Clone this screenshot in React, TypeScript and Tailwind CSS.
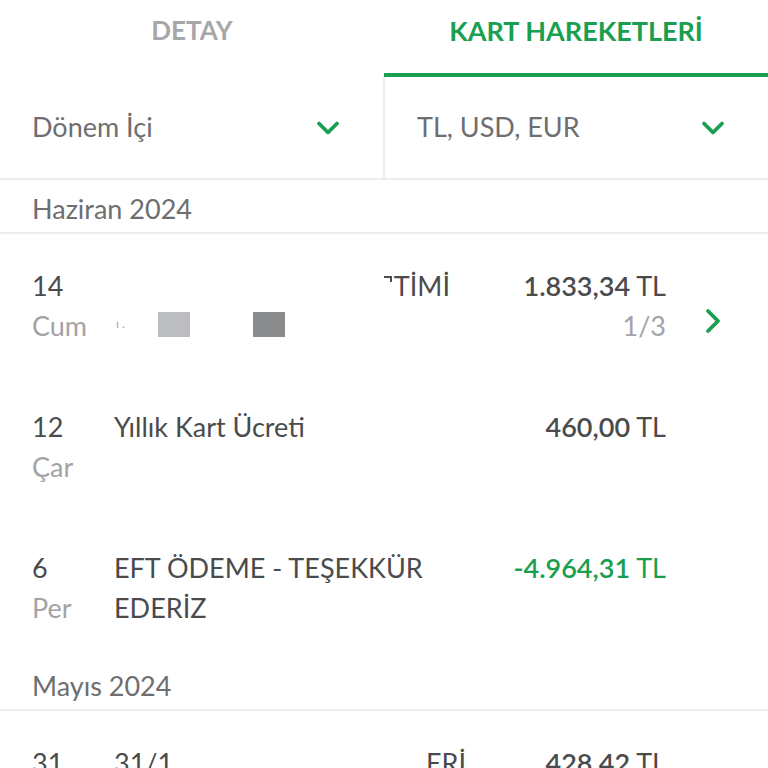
import { ChevronDown, ChevronRight } from 'lucide-react';

type Tx = {
  day: string;
  dayName: string;
  desc: React.ReactNode;
  amount: string;
  credit?: boolean;
  installment?: string;
};

const GREEN = 'text-[#1a9f50]';

const Amount = ({ value, credit }: { value: string; credit?: boolean }) => (
  <span className={credit ? GREEN : 'text-[#4a4b4d]'}>
    <span className="font-semibold">{value}</span>
    <span> TL</span>
  </span>
);

const SectionHeader = ({ title }: { title: string }) => (
  <div className="h-[54px] flex items-center pt-[6px] px-8 border-b-2 border-[#ededed] text-[27px] text-[#6e6e70]">
    {title}
  </div>
);

const Row = ({ tx }: { tx: Tx }) => (
  <div className="h-[141px] flex pt-[32px] pl-8 pr-[46px] text-[27px] leading-[40px]">
    <div className="w-[82px] shrink-0">
      <div className="text-[27px] text-[#4a4b4d]">{tx.day}</div>
      <div className="text-[#a3a3a5]">{tx.dayName}</div>
    </div>
    <div className="w-[356px] shrink-0 text-[#4a4b4d]">{tx.desc}</div>
    <div className="flex-1 flex flex-col items-end whitespace-nowrap">
      <Amount value={tx.amount} credit={tx.credit} />
      {tx.installment && <span className="text-[#a3a3a5]">{tx.installment}</span>}
    </div>
    <div className="w-[56px] shrink-0 flex justify-end pt-[35px]">
      {tx.installment && <ChevronRight className="w-[40px] h-[40px] text-[#1a9f50] -mr-[11px]" strokeWidth={2.3} />}
    </div>
  </div>
);

const transactions: Tx[] = [
  {
    day: '14',
    dayName: 'Cum',
    desc: (
      <div>
        <div className="flex justify-end pr-[20px]">
          <span className="inline-block w-[8px] h-[6px] border-t-2 border-r-2 border-[#4a4b4d] mt-[10px] mr-[2px]" />
          <span>TİMİ</span>
        </div>
        <div className="flex items-center h-[40px] -mt-[2px]">
          <span className="text-[12px] text-[#a3a3a5] w-[44px] pl-[2px]">ı .</span>
          <span className="w-[32px] h-[25px] bg-[#bbbdc0]" />
          <span className="w-[63px]" />
          <span className="w-[32px] h-[25px] bg-[#8a8c8e]" />
        </div>
      </div>
    ),
    amount: '1.833,34',
    installment: '1/3',
  },
  { day: '12', dayName: 'Çar', desc: 'Yıllık Kart Ücreti', amount: '460,00' },
  { day: '6', dayName: 'Per', desc: 'EFT ÖDEME - TEŞEKKÜR EDERİZ', amount: '-4.964,31', credit: true },
];

export default function App() {
  return (
    <div className="w-[768px] h-[768px] overflow-hidden bg-white font-['Lato',sans-serif]">
      {/* Tabs */}
      <div className="flex h-[77px]">
        <div className="flex-1 pt-[11px] text-center text-[26px] font-bold text-[#a7a7a9]">DETAY</div>
        <div className={`flex-1 pt-[11px] text-center text-[27px] font-bold ${GREEN} border-b-4 border-[#1a9f50]`}>
          KART HAREKETLERİ
        </div>
      </div>

      {/* Filters */}
      <div className="flex h-[103px] border-b-2 border-[#ededed]">
        <div className="flex-1 flex items-center justify-between pl-8 pr-[37px] border-r-2 border-[#ededed] text-[27px] text-[#6e6e70]">
          <span>Dönem İçi</span>
          <ChevronDown className="w-[36px] h-[36px] text-[#1a9f50]" strokeWidth={2.5} />
        </div>
        <div className="flex-1 flex items-center justify-between pl-8 pr-[37px] text-[27px] text-[#6e6e70]">
          <span>TL, USD, EUR</span>
          <ChevronDown className="w-[36px] h-[36px] text-[#1a9f50]" strokeWidth={2.5} />
        </div>
      </div>

      <SectionHeader title="Haziran 2024" />
      {transactions.map((tx) => (
        <Row key={tx.day} tx={tx} />
      ))}

      <SectionHeader title="Mayıs 2024" />
      <Row
        tx={{
          day: '31',
          dayName: 'Cum',
          desc: (
            <div className="flex justify-between pr-[4px]">
              <span>31/1</span>
              <span>ERİ</span>
            </div>
          ),
          amount: '428,42',
        }}
      />
    </div>
  );
}
